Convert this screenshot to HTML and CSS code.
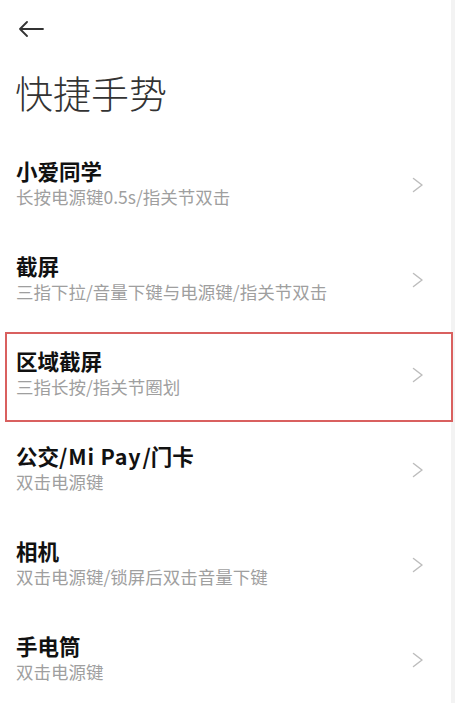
FILE: index.html
```html
<!DOCTYPE html>
<html lang="zh-CN">
<head>
<meta charset="utf-8">
<title>快捷手势</title>
<link rel="stylesheet" href="styles.css">
</head>
<body>
<div class="page">
  <div class="topbar">
    <svg class="back" width="26" height="16" viewBox="0 0 26 16" aria-hidden="true">
      <path d="M25 8H2M9 1L2 8l7 7" fill="none" stroke="#333" stroke-width="1.8" stroke-linecap="round" stroke-linejoin="round"/>
    </svg>
  </div>
  <h1 class="heading">快捷手势</h1>
  <ul class="list">
    <li class="row">
      <div class="text"><div class="title">小爱同学</div><div class="sub">长按电源键0.5s/指关节双击</div></div>
      <svg class="chev" width="12" height="16" viewBox="0 0 12 16"><path d="M1.5 1.5L10 8l-8.5 6.5" fill="none" stroke="#bdbdbd" stroke-width="1.5" stroke-linecap="round" stroke-linejoin="round"/></svg>
    </li>
    <li class="row">
      <div class="text"><div class="title">截屏</div><div class="sub">三指下拉/音量下键与电源键/指关节双击</div></div>
      <svg class="chev" width="12" height="16" viewBox="0 0 12 16"><path d="M1.5 1.5L10 8l-8.5 6.5" fill="none" stroke="#bdbdbd" stroke-width="1.5" stroke-linecap="round" stroke-linejoin="round"/></svg>
    </li>
    <li class="row highlight">
      <div class="text"><div class="title">区域截屏</div><div class="sub">三指长按/指关节圈划</div></div>
      <svg class="chev" width="12" height="16" viewBox="0 0 12 16"><path d="M1.5 1.5L10 8l-8.5 6.5" fill="none" stroke="#bdbdbd" stroke-width="1.5" stroke-linecap="round" stroke-linejoin="round"/></svg>
    </li>
    <li class="row">
      <div class="text"><div class="title">公交/<span class="latin">Mi Pay</span>/门卡</div><div class="sub">双击电源键</div></div>
      <svg class="chev" width="12" height="16" viewBox="0 0 12 16"><path d="M1.5 1.5L10 8l-8.5 6.5" fill="none" stroke="#bdbdbd" stroke-width="1.5" stroke-linecap="round" stroke-linejoin="round"/></svg>
    </li>
    <li class="row">
      <div class="text"><div class="title">相机</div><div class="sub">双击电源键/锁屏后双击音量下键</div></div>
      <svg class="chev" width="12" height="16" viewBox="0 0 12 16"><path d="M1.5 1.5L10 8l-8.5 6.5" fill="none" stroke="#bdbdbd" stroke-width="1.5" stroke-linecap="round" stroke-linejoin="round"/></svg>
    </li>
    <li class="row">
      <div class="text"><div class="title">手电筒</div><div class="sub">双击电源键</div></div>
      <svg class="chev" width="12" height="16" viewBox="0 0 12 16"><path d="M1.5 1.5L10 8l-8.5 6.5" fill="none" stroke="#bdbdbd" stroke-width="1.5" stroke-linecap="round" stroke-linejoin="round"/></svg>
    </li>
  </ul>
</div>
</body>
</html>
```

FILE: styles.css
```css
html, body {
  margin: 0;
  padding: 0;
  background: #f3f3f3;
}
body {
  font-family: "Noto Sans CJK SC", "Noto Sans", sans-serif;
  height: 703px;
  overflow: hidden;
}
.page {
  width: 451px;
  height: 703px;
  background: #ffffff;
}
.topbar {
  height: 58px;
  display: flex;
  align-items: center;
  padding-left: 18px;
}
.back {
  display: block;
}
.heading {
  margin: 9px 0 0 0;
  padding-left: 15px;
  height: 52px;
  font-size: 38px;
  line-height: 50px;
  font-weight: 300;
  color: #333;
}
.list {
  list-style: none;
  margin: 18px 0 0 0;
  padding: 0;
}
.row {
  position: relative;
  height: 95px;
  box-sizing: border-box;
  display: flex;
  align-items: center;
  justify-content: space-between;
  padding: 0 27px 0 16px;
}
.text {
  display: flex;
  flex-direction: column;
  margin-top: -3px;
}
.title {
  font-size: 21.5px;
  line-height: 28px;
  font-weight: 700;
  color: #111;
}
.latin {
  letter-spacing: 0.8px;
  padding: 0 1px;
}
.sub {
  font-size: 17.5px;
  line-height: 24px;
  color: #9f9f9f;
}
.chev {
  display: block;
}
.highlight::after {
  content: "";
  position: absolute;
  left: 5px;
  right: -2px;
  top: 5px;
  bottom: 0;
  border: 2px solid #d9605f;
}
```
